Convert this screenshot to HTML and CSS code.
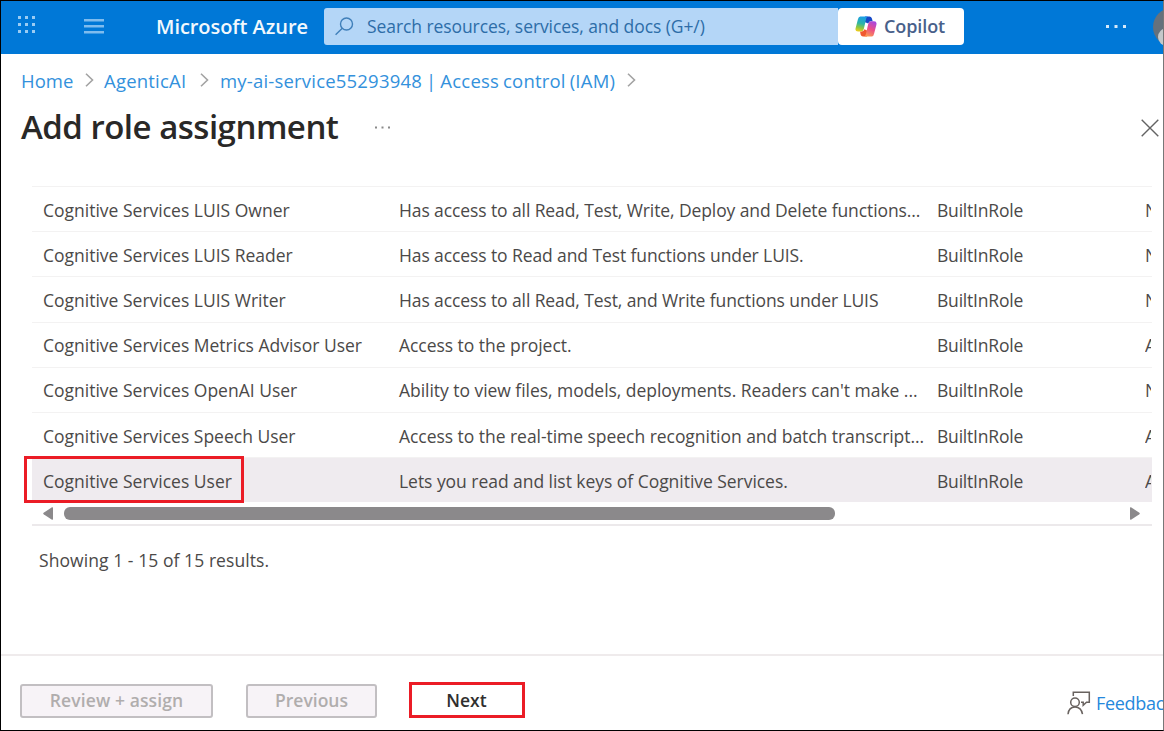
FILE: index.html
```html
<!DOCTYPE html>
<html lang="en">
<head>
<meta charset="utf-8">
<title>Add role assignment - Microsoft Azure</title>
<link rel="stylesheet" href="styles.css">
</head>
<body>
<div class="window">
  <header class="topbar">
    <svg class="waffle" width="18" height="18" viewBox="0 0 18 18" fill="#9accf3"><path d="M0 0h3v3H0zM7 0h3v3H7zM14 0h3v3h-3zM0 7h3v3H0zM7 7h3v3H7zM14 7h3v3h-3zM0 14h3v3H0zM7 14h3v3H7zM14 14h3v3h-3z"/></svg>
    <svg class="burger" width="20" height="16" viewBox="0 0 20 16" fill="#7fbcee"><path d="M0 1h20v2.500H0zM0 7h20v2.500H0zM0 13h20v2.500H0z"/></svg>
    <span class="brand">Microsoft Azure</span>
    <div class="search">
      <svg width="19" height="19" viewBox="0 0 19 19" fill="none" stroke="#3f7fb9" stroke-width="1.4"><circle cx="11.5" cy="7" r="6"/><path d="M7.3 11.3L.6 17.8"/></svg>
      <span class="search-text">Search resources, services, and docs (G+/)</span>
    </div>
    <button class="copilot">
      <svg width="22" height="21" viewBox="0 0 22 21">
        <defs>
          <linearGradient id="cool" x1=".5" y1="0" x2=".3" y2="1"><stop offset="0" stop-color="#1b9de8"/><stop offset=".45" stop-color="#2bb5a8"/><stop offset=".75" stop-color="#8fc83e"/><stop offset="1" stop-color="#f2cc1c"/></linearGradient>
          <linearGradient id="warm" x1=".7" y1="0" x2=".3" y2="1"><stop offset="0" stop-color="#a848e0"/><stop offset=".5" stop-color="#ec4f86"/><stop offset="1" stop-color="#fb9a50"/></linearGradient>
        </defs>
        <path d="M10 .5h4.500q1.800 0 2.300 1.800l.9 2.900h-1.500q-2.300 0-3 2.300L9.500 6z" fill="#1649c8"/>
        <path d="M12 20.500H8q-1.800 0-2.300-1.800L5 15.600h1.500q2.200 0 3-2.300L13 15z" fill="#f0582f"/>
        <path d="M5.200.5h8q-1.500.2-2 2L8.800 13q-.8 2.600-3 2.600H3q-3.200 0-2.400-3.300L3 3Q3.600.5 5.200.5z" fill="url(#cool)"/>
        <path d="M16.800 20.500h-8q1.500-.2 2-2L13.200 8q.8-2.800 3-2.800H19q3.200 0 2.400 3.500L19 18q-.6 2.500-2.200 2.500z" fill="url(#warm)"/>
      </svg>
      <span>Copilot</span>
    </button>
    <svg class="more" width="21" height="3" viewBox="0 0 21 3" fill="#d5e9fa"><path d="M0 0h3v3H0zM8.500 0h3v3h-3zM17 0h3v3h-3z"/></svg>
    <svg class="avatar" width="10" height="38" viewBox="0 0 10 38"><circle cx="19" cy="19" r="19" fill="#65717c"/><circle cx="14" cy="29" r="9" fill="#c5c8ca"/></svg>
  </header>

  <nav class="crumbs">
    <a class="c1">Home</a>
    <svg class="chev" width="9" height="14" viewBox="0 0 9 14"><path d="M1 .7L7.500 7 1 13.300"/></svg>
    <a class="c2">AgenticAI</a>
    <svg class="chev" width="9" height="14" viewBox="0 0 9 14"><path d="M1 .7L7.500 7 1 13.300"/></svg>
    <a class="c3">my-ai-service55293948 | Access control (IAM)</a>
    <svg class="chev" width="9" height="14" viewBox="0 0 9 14"><path d="M1 .7L7.500 7 1 13.300"/></svg>
  </nav>

  <div class="title">
    <h1>Add role assignment</h1>
    <svg class="dots" width="17" height="3" viewBox="0 0 17 3" fill="#8a8a8a"><path d="M1 .5h2v2H1zM7.500.5h2v2h-2zM14 .5h2v2h-2z"/></svg>
    <svg class="close" width="18" height="18" viewBox="0 0 18 18" fill="none" stroke="#636363" stroke-width="1.400"><path d="M.7.700l16.600 16.600M17.300.700L.7 17.300"/></svg>
  </div>

  <main class="grid">
    <div class="row"><span class="name">Cognitive Services LUIS Owner</span><span class="desc">Has access to all Read, Test, Write, Deploy and Delete functions...</span><span class="type">BuiltInRole</span><span class="cat">N</span></div>
    <div class="row"><span class="name">Cognitive Services LUIS Reader</span><span class="desc">Has access to Read and Test functions under LUIS.</span><span class="type">BuiltInRole</span><span class="cat">N</span></div>
    <div class="row"><span class="name">Cognitive Services LUIS Writer</span><span class="desc">Has access to all Read, Test, and Write functions under LUIS</span><span class="type">BuiltInRole</span><span class="cat">N</span></div>
    <div class="row"><span class="name">Cognitive Services Metrics Advisor User</span><span class="desc wide">Access to the project.</span><span class="type">BuiltInRole</span><span class="cat">A</span></div>
    <div class="row"><span class="name">Cognitive Services OpenAI User</span><span class="desc wide">Ability to view files, models, deployments. Readers can't make ...</span><span class="type">BuiltInRole</span><span class="cat">N</span></div>
    <div class="row"><span class="name">Cognitive Services Speech User</span><span class="desc wide">Access to the real-time speech recognition and batch transcript...</span><span class="type">BuiltInRole</span><span class="cat">A</span></div>
    <div class="row selected"><span class="name">Cognitive Services User</span><span class="desc wide">Lets you read and list keys of Cognitive Services.</span><span class="type">BuiltInRole</span><span class="cat">A</span></div>
    <div class="scrollbar">
      <svg width="10" height="13" viewBox="0 0 10 13" fill="#8b898b"><path d="M9 .3Q10 0 10 1v11q0 1-1 .7L.6 7.300q-.8-.8 0-1.600z"/></svg>
      <div class="thumb"></div>
      <svg class="right" width="10" height="13" viewBox="0 0 10 13" fill="#8b898b"><path d="M1 .3Q0 0 0 1v11q0 1 1 .7l8.400-5.400q.8-.8 0-1.600z"/></svg>
    </div>
  </main>
  <p class="count">Showing 1 - 15 of 15 results.</p>

  <footer class="footer">
    <button class="btn review" disabled>Review + assign</button>
    <button class="btn prev" disabled>Previous</button>
    <button class="btn next">Next</button>
    <a class="feedback">
      <svg width="24" height="24" viewBox="0 0 24 24" fill="none" stroke="#68625f" stroke-width="1.500"><path d="M6.300 5V1.300h16v10h-2.800l-3.300 3v-3h-2.200"/><circle cx="8" cy="11.300" r="4.300"/><path d="M1 23.200q.7-7.200 7-7.200t7.500 7.200"/></svg>
      <span>Feedbac</span>
    </a>
  </footer>
  <div class="mark"></div>
</div>
</body>
</html>
```
FILE: styles.css
```css
* { box-sizing: border-box; }
body { margin: 0; background: #fff; font-family: "Open Sans", "Noto Sans", sans-serif; }
.window { position: relative; width: 1164px; height: 731px; overflow: hidden; border: 1px solid #000; border-right-color: #777; display: flex; flex-direction: column; white-space: nowrap; }
svg { display: block; flex: none; }
button { font: inherit; }

.topbar { height: 53px; flex: none; background: #0078d7; display: flex; align-items: center; }
.waffle { margin: 0 0 5px 17px; }
.burger { margin: 0 0 3px 48px; }
.brand { margin-left: 52px; width: 168px; color: #f2f8fd; font-size: 20px; font-weight: 650; letter-spacing: -0.05px; line-height: 36px; margin-bottom: 2px; }
.search { width: 514px; height: 37px; margin-bottom: 3px; padding-left: 11px; background: #b4d6f7; border-radius: 3px 0 0 3px; display: flex; align-items: center; }
.search-text { margin-left: 13px; font-size: 17.5px; letter-spacing: -0.08px; color: #2d6da8; }
.copilot { width: 126px; height: 37px; margin: 0 0 3px; padding: 0 0 0 17px; border: 0; border-radius: 4px; background: #fff; display: flex; align-items: center; color: #48608a; font-size: 18px; font-weight: 600; letter-spacing: -0.1px; }
.copilot span { margin-left: 7px; }
.more { margin: 0 0 2px 142px; }
.avatar { margin: 0 0 2px auto; }

.crumbs { height: 52px; flex: none; padding-left: 20px; display: flex; align-items: center; font-size: 18.500px; color: #3391dc; }
.c1 { width: 64px; }
.c2 { width: 96px; margin-left: 10px; letter-spacing: 0.2px; }
.c3 { width: 407px; margin-left: 11px; letter-spacing: 0.2px; word-spacing: -1px; }
.chev { fill: none; stroke: #a3a3a3; stroke-width: 1.600; }

.title { height: 43px; flex: none; padding-left: 20px; display: flex; align-items: center; }
h1 { margin: 0 0 2px; width: 353px; font-size: 33px; line-height: 41px; font-weight: 600; letter-spacing: -0.5px; color: #292827; }
.close { margin: 0 4px 0 auto; }

.grid { margin: 37px 0 0 31px; width: 1120px; height: 340px; flex: none; overflow: hidden; border-top: 1px solid #f3f2f2; border-bottom: 2px solid #ece9eb; }
.row { height: 45.200px; padding: 1px 0 0 11px; display: flex; align-items: center; border-bottom: 1px solid #f3f2f2; font-size: 17.500px; color: #4b4948; }
.row span { flex: none; }
.name { width: 356px; }
.desc { width: 538px; letter-spacing: -0.1px; }
.desc.wide { letter-spacing: -0.04px; }
.type { width: 208px; letter-spacing: -0.2px; }
.cat { width: 6px; overflow: hidden; }
.row.selected { background: #efebef; height: 44px; border-bottom: 0; }
.scrollbar { height: 22px; padding: 1px 12px 0 11px; display: flex; align-items: center; }
.thumb { width: 771px; height: 13px; margin-left: 11px; border-radius: 6px; background: #8b898b; }
.right { margin-left: auto; }
.count { margin: 21px 0 0 38px; font-size: 17.500px; line-height: 26px; letter-spacing: 0.07px; color: #4b4948; }

.footer { height: 76px; margin-top: auto; flex: none; padding: 28px 0 0 19px; border-top: 2px solid #efebec; display: flex; align-items: flex-start; }
.btn { height: 34px; padding: 0; border: 2px solid #c2bfc2; border-radius: 3px; background: #f7f3f7; color: #b0adad; font-size: 17.500px; font-weight: 600; line-height: 28px; padding-bottom: 2px; }
.review { width: 193px; letter-spacing: 0.1px; }
.prev { width: 131px; margin-left: 33px; }
.next { width: 116px; height: 36px; margin: -2px 0 0 32px; padding: 0 1px 0 0; border: 3px solid #eb1c26; border-radius: 0; background: #fff; color: #302f2e; }
.feedback { margin: 7px 0 0 auto; width: 96px; display: flex; align-items: center; font-size: 18px; line-height: 24px; color: #2688dc; }
.feedback span { margin-left: 5px; letter-spacing: -0.3px; }

.mark { position: absolute; left: 23px; top: 455px; width: 220px; height: 47px; border: 3px solid #eb1c26; }
```
